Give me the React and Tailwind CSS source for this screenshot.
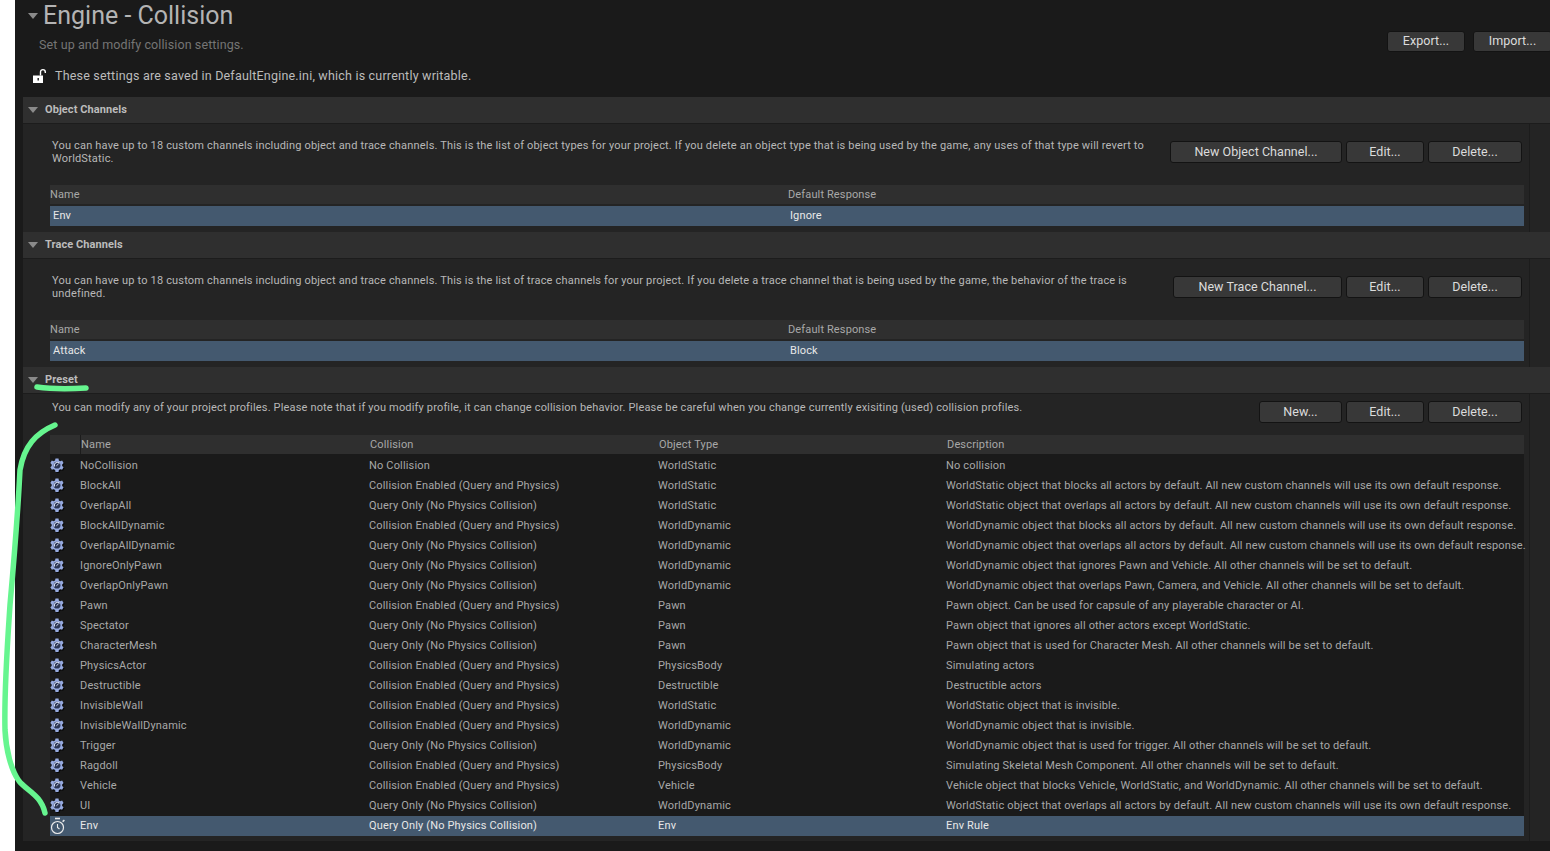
const presets = [
  ["NoCollision", "No Collision", "WorldStatic", "No collision"],
  ["BlockAll", "Collision Enabled (Query and Physics)", "WorldStatic", "WorldStatic object that blocks all actors by default. All new custom channels will use its own default response."],
  ["OverlapAll", "Query Only (No Physics Collision)", "WorldStatic", "WorldStatic object that overlaps all actors by default. All new custom channels will use its own default response."],
  ["BlockAllDynamic", "Collision Enabled (Query and Physics)", "WorldDynamic", "WorldDynamic object that blocks all actors by default. All new custom channels will use its own default response."],
  ["OverlapAllDynamic", "Query Only (No Physics Collision)", "WorldDynamic", "WorldDynamic object that overlaps all actors by default. All new custom channels will use its own default response."],
  ["IgnoreOnlyPawn", "Query Only (No Physics Collision)", "WorldDynamic", "WorldDynamic object that ignores Pawn and Vehicle. All other channels will be set to default."],
  ["OverlapOnlyPawn", "Query Only (No Physics Collision)", "WorldDynamic", "WorldDynamic object that overlaps Pawn, Camera, and Vehicle. All other channels will be set to default."],
  ["Pawn", "Collision Enabled (Query and Physics)", "Pawn", "Pawn object. Can be used for capsule of any playerable character or AI."],
  ["Spectator", "Query Only (No Physics Collision)", "Pawn", "Pawn object that ignores all other actors except WorldStatic."],
  ["CharacterMesh", "Query Only (No Physics Collision)", "Pawn", "Pawn object that is used for Character Mesh. All other channels will be set to default."],
  ["PhysicsActor", "Collision Enabled (Query and Physics)", "PhysicsBody", "Simulating actors"],
  ["Destructible", "Collision Enabled (Query and Physics)", "Destructible", "Destructible actors"],
  ["InvisibleWall", "Collision Enabled (Query and Physics)", "WorldStatic", "WorldStatic object that is invisible."],
  ["InvisibleWallDynamic", "Collision Enabled (Query and Physics)", "WorldDynamic", "WorldDynamic object that is invisible."],
  ["Trigger", "Query Only (No Physics Collision)", "WorldDynamic", "WorldDynamic object that is used for trigger. All other channels will be set to default."],
  ["Ragdoll", "Collision Enabled (Query and Physics)", "PhysicsBody", "Simulating Skeletal Mesh Component. All other channels will be set to default."],
  ["Vehicle", "Collision Enabled (Query and Physics)", "Vehicle", "Vehicle object that blocks Vehicle, WorldStatic, and WorldDynamic. All other channels will be set to default."],
  ["UI", "Query Only (No Physics Collision)", "WorldDynamic", "WorldStatic object that overlaps all actors by default. All new custom channels will use its own default response."],
];

const gearPath =
  "M5.5 .5h3l.4 1.9 1.4.8 1.8-.6 1.5 2.5-1.4 1.3v1.6l1.4 1.3-1.5 2.5-1.8-.6-1.4.8-.4 1.9h-3l-.4-1.9-1.4-.8-1.8.6L.3 9.3l1.4-1.3V6.4L.3 5.1l1.5-2.5 1.8.6L5 2.4z";

function Caret({ className }) {
  return (
    <svg width="10" height="6" viewBox="0 0 10 6" className={className}>
      <path d="M0 0h10L5 6z" fill="#8a8a8a" />
    </svg>
  );
}

function Gear() {
  return (
    <svg width="15" height="15" viewBox="0 0 15 15" className="-mt-[2px]">
      <path d={gearPath} fill="#000" opacity=".75" transform="translate(1 1)" />
      <path d={gearPath} fill="#96aae0" />
      <circle cx="7" cy="7.2" r="3.4" fill="#2c3654" />
      <path d="M4.6 8.6A3 3 0 0 1 9.6 5.4" fill="none" stroke="#d0daf5" strokeWidth="1.1" />
      <path d="M6.4 7.8 8.6 5.8" stroke="#d0daf5" strokeWidth="1" />
    </svg>
  );
}

function Stopwatch() {
  return (
    <svg width="16" height="18" viewBox="0 0 16 18" fill="none" stroke="#ececec">
      <path d="M5 1.5h5" strokeWidth="1.6" />
      <circle cx="7.5" cy="10.5" r="6" strokeWidth="1.2" />
      <path d="M7.5 7v3.5l2 1.5" strokeWidth="1.1" />
      <path d="M12.6 4.6l1.8-1.4" strokeWidth="1.5" />
    </svg>
  );
}

function Lock() {
  return (
    <svg width="16" height="16" viewBox="0 0 16 16">
      <path d="M1 7.5h10V15H1z" fill="#fff" />
      <path d="M5.5 10h1.4v2.6H5.5z" fill="#1a1a1a" />
      <path d="M8.5 7.5V4a2.4 2.4 0 0 1 4.8 0v1" fill="none" stroke="#fff" strokeWidth="1.4" />
    </svg>
  );
}

function Btn({ w, h = "h-[22px]", children }) {
  return (
    <button className={`rounded-[3px] border border-[#131313] bg-[#383838] text-[12.5px] tracking-[0.05px] text-[#dcdcdc] ${h} ${w}`}>
      {children}
    </button>
  );
}

function SectionBar({ title }) {
  return (
    <div className="flex h-[27px] items-center border-b border-b-[#1c1c1c] bg-[#2f2f2f]">
      <Caret className="ml-[5px]" />
      <span className="ml-[7px] text-[11px] font-bold tracking-[0.07px] text-[#bcbcbc]">{title}</span>
    </div>
  );
}

function ChannelTable({ name, response }) {
  return (
    <div className="mt-[13px] mr-[5px] ml-[27px] text-[11px] tracking-[0.13px]">
      <div className="flex h-[19px] items-center bg-[#2f2f2f] pt-[1px] text-[#a8a8a8]">
        <span className="w-[738px]">Name</span>
        <span>Default Response</span>
      </div>
      <div className="mt-[2px] flex h-[20px] items-center bg-[#44596f] text-[#e8e8e8]">
        <span className="w-[738px] pl-[3px]">{name}</span>
        <span className="pl-[2px]">{response}</span>
      </div>
    </div>
  );
}

function ChannelSection({ title, text, name, response, newLabel, newWidth }) {
  return (
    <section>
      <SectionBar title={title} />
      <div className="mr-[20px] h-[108px] border-r border-r-[#1c1c1c] pt-[15px]">
        <div className="flex h-[33px] items-start pr-[7px] pl-[29px]">
          <p className="w-[1100px] text-[11px] leading-[13px] tracking-[0.18px] text-[#b8b8b8]">{text}</p>
          <div className="ml-auto flex gap-[4px] pt-[2px]">
            <Btn w={newWidth}>{newLabel}</Btn>
            <Btn w="w-[78px]">Edit...</Btn>
            <Btn w="w-[94px]">Delete...</Btn>
          </div>
        </div>
        <ChannelTable name={name} response={response} />
      </div>
    </section>
  );
}

function PresetRow({ row, icon, selected }) {
  return (
    <div className={`flex h-[20px] items-center whitespace-nowrap text-[11px] tracking-[0.16px] ${selected ? "bg-[#44596f] text-[#e8e8e8]" : "text-[#a8a8a8]"}`}>
      <span className="flex w-[30px] shrink-0 items-center">{icon}</span>
      <span className="w-[289px] shrink-0">{row[0]}</span>
      <span className="w-[289px] shrink-0">{row[1]}</span>
      <span className="w-[288px] shrink-0">{row[2]}</span>
      <span>{row[3]}</span>
    </div>
  );
}

export default function App() {
  return (
    <div className="relative h-[851px] w-[1550px] overflow-hidden bg-white font-['Roboto',sans-serif]">
      <div className="ml-[15px] h-full bg-[#1a1a1a] pl-[8px]">
        <header className="relative h-[97px] pt-[1px]">
          <div className="flex h-[30px] items-center">
            <Caret className="ml-[5px]" />
            <h1 className="ml-[5px] text-[25px] leading-[30px] text-[#b4b4b4]">Engine - Collision</h1>
          </div>
          <p className="mt-[5px] ml-[16px] text-[12.5px] tracking-[0.1px] text-[#757575]">Set up and modify collision settings.</p>
          <div className="mt-[12px] ml-[9px] flex items-center">
            <Lock />
            <span className="ml-[7px] text-[12.5px] tracking-[0.2px] text-[#bcbcbc]">These settings are saved in DefaultEngine.ini, which is currently writable.</span>
          </div>
          <div className="absolute top-[31px] right-0 flex gap-[8px]">
            <Btn w="w-[78px]" h="h-[21px]">Export...</Btn>
            <Btn w="w-[79px] -mr-[2px]" h="h-[21px]">Import...</Btn>
          </div>
        </header>

        <div className="bg-[#242424]">
          <ChannelSection
            title="Object Channels"
            text="You can have up to 18 custom channels including object and trace channels. This is the list of object types for your project. If you delete an object type that is being used by the game, any uses of that type will revert to WorldStatic."
            name="Env"
            response="Ignore"
            newLabel="New Object Channel..."
            newWidth="w-[172px]"
          />
          <ChannelSection
            title="Trace Channels"
            text="You can have up to 18 custom channels including object and trace channels. This is the list of trace channels for your project. If you delete a trace channel that is being used by the game, the behavior of the trace is undefined."
            name="Attack"
            response="Block"
            newLabel="New Trace Channel..."
            newWidth="w-[169px]"
          />
          <section>
            <SectionBar title="Preset" />
            <div className="mr-[20px] h-[447px] border-r border-r-[#1c1c1c] pt-[7px]">
              <div className="flex h-[34px] items-start pr-[7px] pl-[29px]">
                <p className="text-[11px] leading-[13px] tracking-[0.165px] text-[#b8b8b8]">
                  You can modify any of your project profiles. Please note that if you modify profile, it can change collision behavior. Please be careful when you change currently exisiting (used) collision profiles.
                </p>
                <div className="ml-auto flex gap-[4px]">
                  <Btn w="w-[83px]">New...</Btn>
                  <Btn w="w-[78px]">Edit...</Btn>
                  <Btn w="w-[94px]">Delete...</Btn>
                </div>
              </div>
              <div className="mr-[5px] ml-[27px] bg-[#1a1a1a]">
                <div className="mb-[2px] flex h-[19px] items-center bg-[#2f2f2f] pt-[1px] text-[11px] tracking-[0.16px] text-[#a8a8a8]">
                  <span className="-mt-[1px] h-[19px] w-[31px] shrink-0 border-r border-r-[#1c1c1c]" />
                  <span className="w-[289px] shrink-0">Name</span>
                  <span className="w-[289px] shrink-0">Collision</span>
                  <span className="w-[288px] shrink-0">Object Type</span>
                  <span>Description</span>
                </div>
                {presets.map((row) => (
                  <PresetRow key={row[0]} row={row} icon={<Gear />} />
                ))}
                <PresetRow
                  row={["Env", "Query Only (No Physics Collision)", "Env", "Env Rule"]}
                  icon={<Stopwatch />}
                  selected
                />
              </div>
            </div>
          </section>
        </div>
      </div>

      {/* green marker strokes drawn on top of the screenshot */}
      <svg className="pointer-events-none absolute top-0 left-0" width="1550" height="851" fill="none" stroke="#66f58f" strokeLinecap="round" strokeLinejoin="round">
        <path d="M37 387c14 2 32 2 49 1" strokeWidth="5.5" />
        <path d="M55 425C36 433 24 446 20 470c-2 40-6 90-10 135-3 45-6 85-5 125 1 20 6 40 14 51 8 10 22 14 26 32" strokeWidth="5.5" />
      </svg>
    </div>
  );
}
